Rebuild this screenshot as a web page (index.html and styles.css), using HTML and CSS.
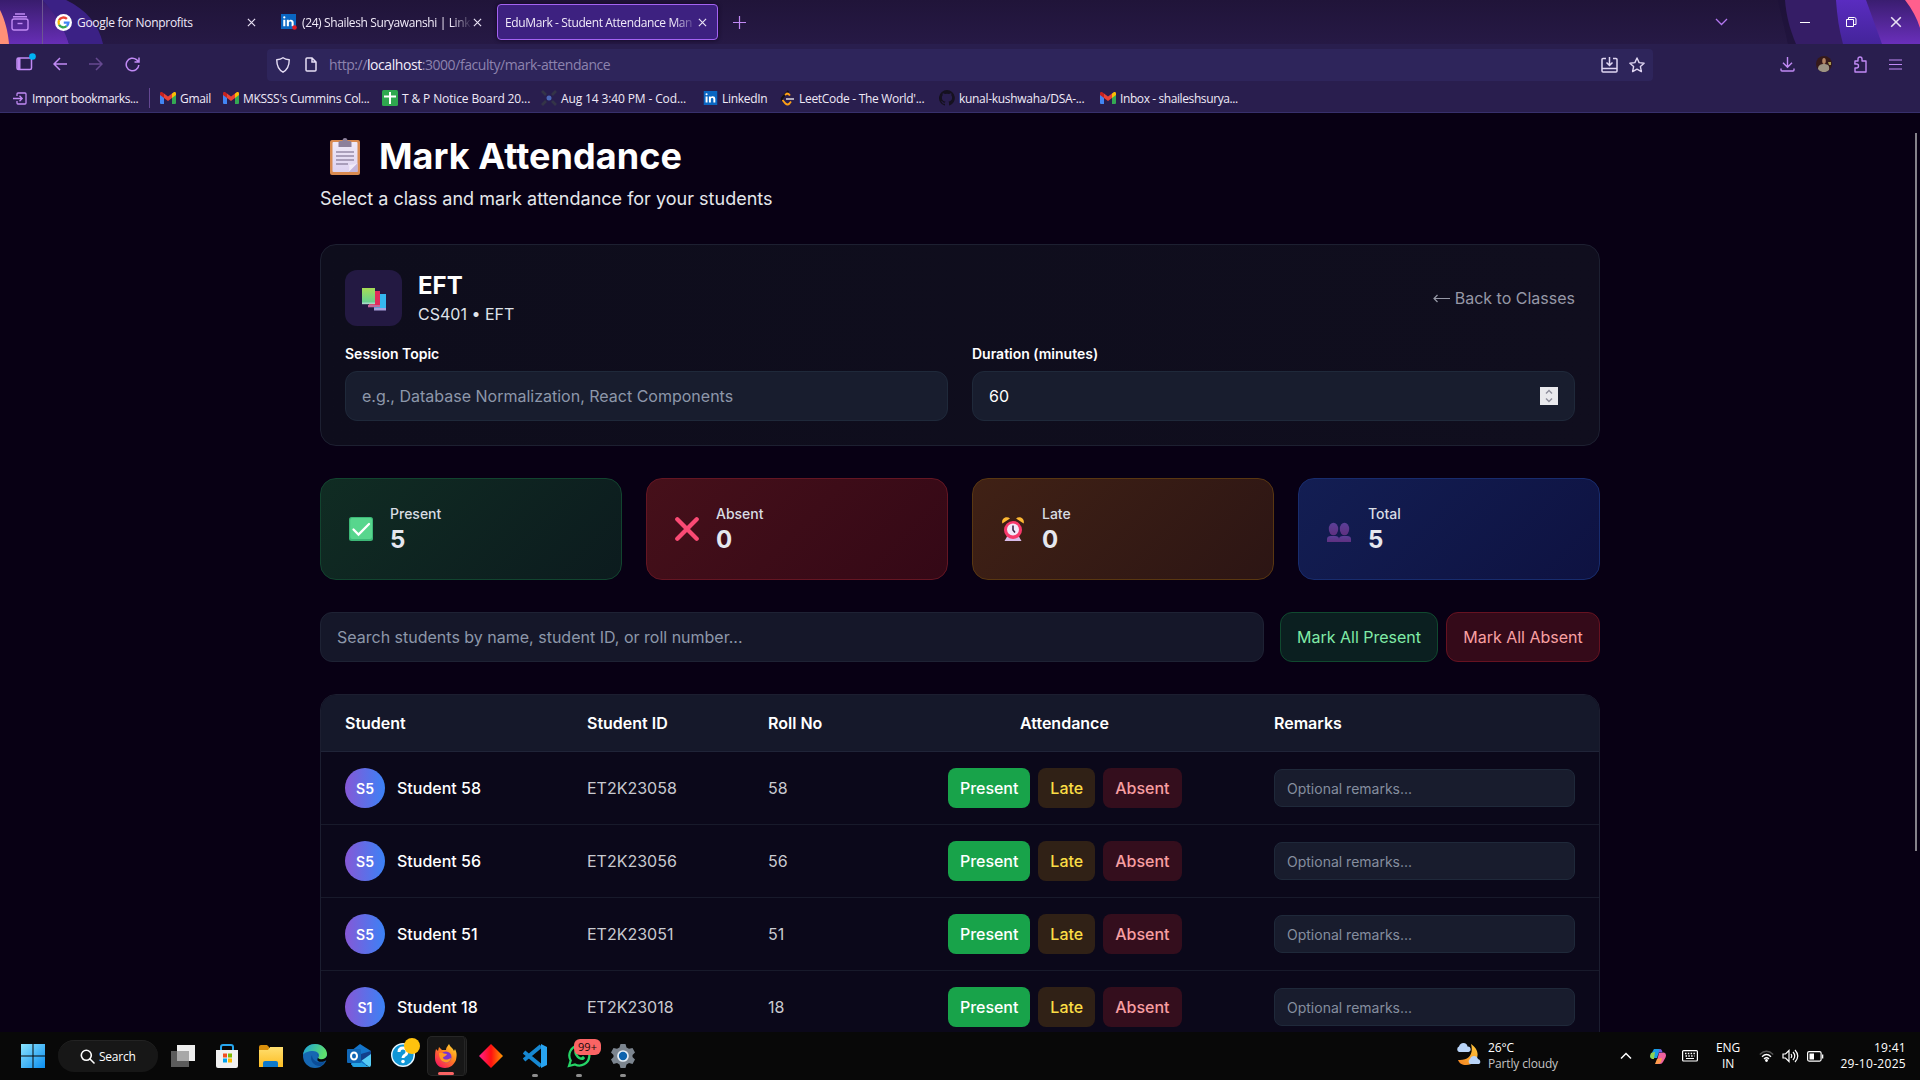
FILE: index.html
```html
<!DOCTYPE html>
<html lang="en">
<head>
<meta charset="utf-8">
<title>EduMark - Student Attendance Management</title>
<link rel="stylesheet" href="styles.css">
</head>
<body>
<svg class="sprite" aria-hidden="true">
  <defs>
    <linearGradient id="win" x1="0" y1="0" x2="1" y2="1"><stop offset="0" stop-color="#8be4ff"/><stop offset="1" stop-color="#0a8df0"/></linearGradient>
    <linearGradient id="edgeTop" x1="0" y1="0" x2="1" y2="0.3"><stop offset="0" stop-color="#1aa0dc"/><stop offset="1" stop-color="#5fe06c"/></linearGradient>
    <linearGradient id="fox" x1="1" y1="0" x2="0.2" y2="1"><stop offset="0" stop-color="#ffe83a"/><stop offset=".45" stop-color="#ff8a1c"/><stop offset="1" stop-color="#f7145f"/></linearGradient>
    <linearGradient id="gem"><stop offset="0" stop-color="#ff1f8f"/><stop offset=".5" stop-color="#ff1010"/><stop offset="1" stop-color="#ff9a00"/></linearGradient>
    <linearGradient id="folder" x1="0" y1="0" x2="0" y2="1"><stop offset="0" stop-color="#ffdf70"/><stop offset="1" stop-color="#fdbd23"/></linearGradient>
    <linearGradient id="moon" x1="1" y1="0" x2="0" y2="1"><stop offset="0" stop-color="#ffc93c"/><stop offset="1" stop-color="#f58320"/></linearGradient>
    <linearGradient id="bandA" x1="0" y1="0" x2="0" y2="1"><stop offset="0" stop-color="#3a1d70"/><stop offset="1" stop-color="#6a2fbb"/></linearGradient>
    <linearGradient id="bandB" x1="0" y1="0" x2="0" y2="1"><stop offset="0" stop-color="#5a2cc0"/><stop offset="1" stop-color="#44249a"/></linearGradient>
    <linearGradient id="paper" x1="0" y1="0" x2="0" y2="1"><stop offset="0" stop-color="#f0e9f7"/><stop offset="1" stop-color="#ddd2f0"/></linearGradient>
    <linearGradient id="green" x1="0" y1="0" x2="0" y2="1"><stop offset="0" stop-color="#a6dc55"/><stop offset="1" stop-color="#62cf94"/></linearGradient>
    <linearGradient id="people" x1="0" y1="0" x2="0" y2="1"><stop offset="0" stop-color="#5b3f98"/><stop offset="1" stop-color="#5f3080"/></linearGradient>
  </defs>
  <symbol id="gmail" viewBox="0 0 16 12"><path fill="#4285f4" d="M0 2v9a1 1 0 0 0 1 1h3V5z"/><path fill="#34a853" d="M16 2v9a1 1 0 0 1-1 1h-3V5z"/><path fill="#fbbc04" d="M12 1.5 14 0c1-.5 2 .3 2 1.4V3l-4 3z"/><path fill="#c5221f" d="M4 1.500 2 0C1-.5 0 .3 0 1.400V3l4 3z"/><path fill="#ea4335" d="M4 1.500 8 4.600l4-3.100V6L8 9 4 6z"/></symbol>
  <symbol id="linkedin" viewBox="0 0 16 16"><path fill="#0a66c2" d="M0 0h16v16H0z"/><path fill="#fff" d="M2.400 6.200h2.200V13H2.400zM2.300 3.700a1.200 1.200 0 1 1 2.400 0 1.200 1.200 0 0 1-2.400 0zM6.200 6.200h2.100v1c.9-1.700 5.200-1.900 5.200 1.800v4h-2.200V9.500c0-2-2.900-1.900-2.900 0V13H6.200z"/></symbol>
  <symbol id="cross" viewBox="0 0 10 10"><path d="m1 1 8 8M9 1 1 9" fill="none" stroke="#e9e2f5" stroke-width="1.300"/></symbol>
</svg>

<div class="browser">
  <header class="tabbar">
    <svg class="theme" width="110" height="44" viewBox="0 0 110 44"><path fill="#30195f" opacity=".6" d="M66 0c18 8 31 24 37 44H60L40 0z"/><path fill="url(#bandA)" d="M0 0h42c14 12 23 27 27 44H0z" opacity=".95"/><path fill="#3b2185" d="M42 0h24c21 10 33 25 37 44H69C63 26 54 12 42 0z"/><path fill="#ff9077" d="M0 10c5 10 8 22 9 34H0z"/></svg>
    <svg class="theme theme-right" width="160" height="44" viewBox="0 0 160 44"><path fill="#1b1038" d="M18 0h16l12 44H28z" opacity=".5"/><path fill="#351d66" d="M25 0h135v44H36C30 30 26 15 25 0z"/><path fill="url(#bandB)" d="M76 0h84v44H83C79 30 77 15 76 0z"/><path fill="url(#bandA)" d="M106 0h54v44h-38z"/><path fill="#ff5f8d" d="M145 0h15v28C157 18 152 9 145 0z"/></svg>
    <svg class="ic" width="18" height="18" viewBox="0 0 18 18"><g fill="none" stroke="#c18af5" stroke-width="1.400"><path d="M4 1h10M2 3.800h14"/><rect x="1" y="6" width="16" height="11" rx="2"/><path d="M6.500 10.500h5"/></g></svg>
    <i class="divider"></i>
    <div class="tab">
      <svg width="17" height="17" viewBox="0 0 18 18"><circle cx="9" cy="9" r="9" fill="#fff"/><g fill="none" stroke-width="2.500"><path stroke="#ea4335" d="M4.300 6.700A5.200 5.200 0 0 1 12.600 5.200"/><path stroke="#fbbc05" d="M4.300 6.700a5.300 5.300 0 0 0 0 4.600"/><path stroke="#34a853" d="M4.300 11.300a5.200 5.200 0 0 0 8 1.600"/><path stroke="#4285f4" d="M12.300 12.900a5.100 5.100 0 0 0 1.900-3.700H9.300"/></g></svg>
      <span class="label">Google for Nonprofits</span><svg class="x" width="9" height="9"><use href="#cross"/></svg>
    </div>
    <div class="tab tab-two">
      <svg width="16" height="16" viewBox="0 0 16 16"><use href="#linkedin" width="15" height="15"/><circle cx="13.500" cy="13.500" r="2.300" fill="#e01b24"/></svg>
      <span class="label fade">(24) Shailesh Suryawanshi | Link</span><svg class="x" width="9" height="9"><use href="#cross"/></svg>
    </div>
    <div class="tab active">
      <span class="label fade">EduMark - Student Attendance Man</span><svg class="x" width="9" height="9"><use href="#cross"/></svg>
    </div>
    <svg class="ic" width="13" height="13" viewBox="0 0 13 13"><path d="M6.500 0v13M0 6.500h13" stroke="#c18af5" stroke-width="1.200"/></svg>
    <svg class="ic chev" width="13" height="8" viewBox="0 0 13 8"><path d="m1 1 5.500 5.500L12 1" fill="none" stroke="#b377f0" stroke-width="1.300"/></svg>
    <svg class="ic wc" width="11" height="11" viewBox="0 0 11 11"><path d="M0 5.500h10" stroke="#fff"/></svg>
    <svg class="ic wc" width="12" height="12" viewBox="0 0 12 12"><path d="M1.500 3.500h7v7h-7zM3.500 3V1.500h6l1.500 1v6H8.500" fill="none" stroke="#fff"/></svg>
    <svg class="ic wc" width="12" height="12"><use href="#cross"/></svg>
  </header>

  <nav class="navbar">
    <svg class="side" width="20" height="18" viewBox="0 0 20 18"><rect x="1" y="5" width="14.500" height="11.500" rx="1.500" fill="none" stroke="#c18af5" stroke-width="1.500"/><path d="M1.500 5h3v11h-3z" fill="#c18af5"/><circle cx="16.500" cy="3.500" r="3.300" fill="#00b3f4"/></svg>
    <svg width="14" height="14" viewBox="0 0 14 14"><path d="M14 7H1M7 1 1 7l6 6" fill="none" stroke="#c18af5" stroke-width="1.500"/></svg>
    <svg class="dim" width="14" height="14" viewBox="0 0 14 14"><path d="M0 7h13M7 1l6 6-6 6" fill="none" stroke="#c18af5" stroke-width="1.500"/></svg>
    <svg width="15" height="15" viewBox="0 0 15 15"><path d="M13.800 8A6.300 6.300 0 1 1 11.500 2.600L13.500 4.500M14 .5V5H9.500" fill="none" stroke="#c18af5" stroke-width="1.500"/></svg>
    <div class="urlbar">
      <svg width="14" height="16" viewBox="0 0 14 16"><path d="M7 .8c2 1.500 4 1.900 6.200 2C13.300 9 11.500 12.500 7 15.200 2.500 12.500.7 9 .8 2.800 3 2.700 5 2.300 7 .8z" fill="none" stroke="#e6def5" stroke-width="1.400"/></svg>
      <svg width="12" height="15" viewBox="0 0 12 15"><path d="M1 2a1 1 0 0 1 1-1h5l4 4v8a1 1 0 0 1-1 1H2a1 1 0 0 1-1-1zM7 1v4h4" fill="none" stroke="#e6def5" stroke-width="1.500"/></svg>
      <span class="url">http://<b>localhost</b>:3000/faculty/mark-attendance</span>
      <svg width="17" height="16" viewBox="0 0 17 16"><path d="M5 1.500H2a1 1 0 0 0-1 1V14a1 1 0 0 0 1 1h13a1 1 0 0 0 1-1V2.500a1 1 0 0 0-1-1h-3M1 11.500h15M8.500 0v8M5.500 5.500l3 3 3-3" fill="none" stroke="#e0d6f2" stroke-width="1.500"/></svg>
      <svg width="16" height="16" viewBox="0 0 16 16"><path d="m8 1 2.100 4.600 5 .6-3.700 3.400 1 5L8 12.100 3.600 14.600l1-5L.9 6.200l5-.6z" fill="none" stroke="#e0d6f2" stroke-width="1.400" stroke-linejoin="round"/></svg>
    </div>
    <svg width="15" height="15" viewBox="0 0 15 15"><path d="M7.500 0v10M3 5.800l4.500 4.500L12 5.800M1 11.500V13a1 1 0 0 0 1 1h11a1 1 0 0 0 1-1v-1.500" fill="none" stroke="#c18af5" stroke-width="1.400"/></svg>
    <svg width="16" height="16" viewBox="0 0 16 16"><circle cx="8" cy="8" r="8" fill="#35191a"/><path d="M2 13c0-4 3-5 6-5s6 1 5 6c-3 3-8 3-11-1z" fill="#9d9483"/><ellipse cx="8" cy="5" rx="1.800" ry="3" fill="#b28463"/><path d="M12 6h3v3h-2z" fill="#a79850"/></svg>
    <svg width="15" height="17" viewBox="0 0 15 17"><path d="M2 5h3V3a2 2 0 0 1 4 0v2h4v11H2v-4h1.500a2 2 0 0 0 0-4H1.800z" fill="none" stroke="#c18af5" stroke-width="1.400" stroke-linejoin="round"/></svg>
    <svg width="13" height="11" viewBox="0 0 13 11"><path d="M0 1h13M0 5.500h13M0 10h13" stroke="#c18af5" stroke-width="1.200"/></svg>
  </nav>

  <div class="bookmarks">
    <span class="bm import"><svg width="14" height="13" viewBox="0 0 14 13"><path d="M4 4V2a1 1 0 0 1 1-1h7a1 1 0 0 1 1 1v9a1 1 0 0 1-1 1H5a1 1 0 0 1-1-1V9M0 6.500h9M6.500 3.800 9.200 6.500 6.500 9.200" fill="none" stroke="#c18af5" stroke-width="1.300"/></svg>Import bookmarks...</span>
    <span class="bm"><svg width="16" height="12"><use href="#gmail"/></svg>Gmail</span>
    <span class="bm"><svg width="16" height="12"><use href="#gmail"/></svg>MKSSS's Cummins Col...</span>
    <span class="bm wide"><svg width="16" height="16" viewBox="0 0 16 16"><rect width="16" height="16" rx="1.500" fill="#2fa84f"/><path d="M8 2v12M2 6.500h12" stroke="#fff" stroke-width="2"/></svg>T &amp; P Notice Board 20...</span>
    <span class="bm wide"><svg width="16" height="16" viewBox="0 0 16 16"><path d="m1 1 4 4M15 1l-4 4M1 15l4-4M15 15l-4-4" stroke="#343448" stroke-width="2.800"/><circle cx="8" cy="8" r="2.500" fill="#4a66b5"/></svg>Aug 14 3:40 PM - Cod...</span>
    <span class="bm"><svg width="15" height="14" viewBox="0 0 16 16"><use href="#linkedin"/></svg>LinkedIn</span>
    <span class="bm"><svg width="15" height="16" viewBox="0 0 15 16"><path d="M8.500 1 2.500 7.500q-1.500 1.500 0 3" fill="none" stroke="#141116" stroke-width="2"/><path d="m5 5 2-1.500q1.500 0 3 2M2.500 10l3 3.500q2 2 4 0l1.500-2" fill="none" stroke="#ffa116" stroke-width="1.900"/><path d="M6 9h8" stroke="#c9c5ce" stroke-width="1.700"/></svg>LeetCode - The World'...</span>
    <span class="bm"><svg width="16" height="16" viewBox="0 0 16 16"><path fill="#15111f" d="M8 0a8 8 0 0 0-2.500 15.600c.4.100.5-.2.500-.4v-1.500c-2.200.5-2.700-1-2.700-1-.4-.9-.9-1.200-.9-1.200-.7-.5.100-.5.100-.5.800.1 1.200.8 1.200.8.700 1.300 1.900.9 2.300.7.100-.5.300-.9.500-1.100-1.800-.2-3.600-.9-3.600-4 0-.9.300-1.600.8-2.100 0-.2-.3-1 .1-2.100 0 0 .7-.2 2.200.8a7.500 7.500 0 0 1 4 0c1.500-1 2.200-.8 2.200-.8.400 1.100.1 1.900.1 2.100.5.600.8 1.300.8 2.100 0 3.100-1.900 3.800-3.700 4 .3.300.6.800.6 1.500v2.200c0 .2.100.5.600.4A8 8 0 0 0 8 0z"/></svg>kunal-kushwaha/DSA-...</span>
    <span class="bm tight"><svg width="16" height="12"><use href="#gmail"/></svg>Inbox - shaileshsurya...</span>
  </div>
</div>

<main class="page">
  <div class="container">
    <h1><svg width="32" height="37" viewBox="0 0 32 37"><rect x="1" y="2" width="30" height="35" rx="2" fill="#d98a50"/><rect x="3.500" y="4" width="25" height="30" rx="1" fill="url(#paper)"/><path d="M28.500 25v9h-9z" fill="#c3b5dc"/><path d="M19.500 34c1-2 1-5 .5-7q4 0 8.500-2z" fill="#f1eaf8"/><path d="M9.500 9V4.500Q9.500 3 11 3h2.500q0-3 2.500-3t2.500 3H21q1.500 0 1.500 1.500V9z" fill="#8d809b"/><path d="M7 14h18M7 18h18M7 22h18M7 26h12" stroke="#978ba8" stroke-width="1.300"/></svg><span>Mark Attendance</span></h1>
    <p class="lead">Select a class and mark attendance for your students</p>

    <section class="card">
      <div class="card-head">
        <div class="book"><svg width="25" height="24" viewBox="0 0 25 24"><path d="M12 7h12v16H12z" fill="#35b7ef"/><path d="M12 21h12v2.500H12z" fill="#a9a0dd"/><path d="M7 4h11v15H7z" fill="#e22b5b"/><path d="M6 18h12v2.300H6z" fill="#c2699d"/><path d="M0 1h13v15H0z" fill="url(#green)"/><path d="M0 15.500h13v1.700H0z" fill="#a8d9c6"/></svg></div>
        <div class="who"><h2>EFT</h2><p>CS401 • EFT</p></div>
        <a class="back"><svg width="17" height="9" viewBox="0 0 17 9"><path d="M17 4.500H1M4.500 1 1 4.500 4.500 8" fill="none" stroke="#9698a6" stroke-width="1.200"/></svg>Back to Classes</a>
      </div>
      <div class="fields">
        <div><label>Session Topic</label><div class="input ph">e.g., Database Normalization, React Components</div></div>
        <div><label>Duration (minutes)</label><div class="input">60<svg class="spin" width="18" height="18" viewBox="0 0 18 18"><path fill="#e9e9ed" d="M0 0h18v18H0z"/><path d="m6 6.500 3-3 3 3M6 11.500l3 3 3-3" fill="none" stroke="#8f8f9d" stroke-width="1.400"/></svg></div></div>
      </div>
    </section>

    <section class="stats">
      <div class="stat present"><svg width="24" height="24" viewBox="0 0 24 24"><rect width="24" height="24" rx="2.500" fill="#3db877"/><rect x="1.200" y="1" width="21.800" height="21" rx="2" fill="#57d68d"/><path d="m4.500 12.500 5 5L20 7" fill="none" stroke="#fff" stroke-width="2.300" stroke-linecap="round"/></svg><div><p>Present</p><strong>5</strong></div></div>
      <div class="stat absent"><svg width="24" height="24" viewBox="0 0 24 24"><path d="m2.300 2.300 19.400 19.400m0-19.400L2.300 21.700" stroke="#fa4a74" stroke-width="4.300" stroke-linecap="round"/></svg><div><p>Absent</p><strong>0</strong></div></div>
      <div class="stat late"><svg width="24" height="24" viewBox="0 0 24 24"><path d="M1.300 6.500C0 1.500 5.500-1.500 9 1.500zM22.700 6.500C24 1.500 18.500-1.500 15 1.500z" fill="#fdb833"/><path d="m7 18-3.500 6h17L17 18z" fill="#d8bce9"/><circle cx="12" cy="13" r="9" fill="#f8396b"/><circle cx="12" cy="12.500" r="6" fill="#f1e8f8"/><path d="M12 8.500V13l2 2.500" fill="none" stroke="#3a2446" stroke-width="1.600"/></svg><div><p>Late</p><strong>0</strong></div></div>
      <div class="stat total"><svg width="24" height="20" viewBox="0 4 24 20"><g fill="url(#people)"><ellipse cx="6.500" cy="11" rx="4.700" ry="6.300"/><ellipse cx="17.500" cy="11" rx="4.700" ry="6.300"/><path d="M0 24v-3q0-3 4-3h4q4 0 4 3 0-3 4-3h4q4 0 4 3v3z"/></g></svg><div><p>Total</p><strong>5</strong></div></div>
    </section>

    <section class="tools">
      <div class="input ph search">Search students by name, student ID, or roll number...</div>
      <button class="all green">Mark All Present</button><button class="all red">Mark All Absent</button>
    </section>

    <section class="table">
      <div class="row head"><span>Student</span><span>Student ID</span><span>Roll No</span><span class="mid">Attendance</span><span>Remarks</span></div>
      <div class="row"><div class="student"><i>S5</i>Student 58</div><span>ET2K23058</span><span>58</span><div class="marks"><b class="p">Present</b><b class="l">Late</b><b class="a">Absent</b></div><div class="remark">Optional remarks...</div></div>
      <div class="row"><div class="student"><i>S5</i>Student 56</div><span>ET2K23056</span><span>56</span><div class="marks"><b class="p">Present</b><b class="l">Late</b><b class="a">Absent</b></div><div class="remark">Optional remarks...</div></div>
      <div class="row"><div class="student"><i>S5</i>Student 51</div><span>ET2K23051</span><span>51</span><div class="marks"><b class="p">Present</b><b class="l">Late</b><b class="a">Absent</b></div><div class="remark">Optional remarks...</div></div>
      <div class="row"><div class="student"><i>S1</i>Student 18</div><span>ET2K23018</span><span>18</span><div class="marks"><b class="p">Present</b><b class="l">Late</b><b class="a">Absent</b></div><div class="remark">Optional remarks...</div></div>
    </section>
  </div>
  <i class="scroll"></i>
</main>

<footer class="taskbar">
  <svg class="start" width="24" height="24" viewBox="0 0 24 24"><path fill="url(#win)" d="M0 0h11.500v11.500H0zM12.500 0H24v11.500H12.500zM0 12.500h11.500V24H0zM12.500 12.500H24V24H12.500z"/></svg>
  <div class="pill"><svg width="15" height="15" viewBox="0 0 15 15"><circle cx="6.300" cy="6.300" r="5" fill="none" stroke="#fff" stroke-width="1.600"/><path d="m10 10 4 4" stroke="#fff" stroke-width="1.600" stroke-linecap="round"/></svg>Search</div>
  <div class="apps">
    <div><svg width="24" height="24" viewBox="0 0 24 24"><path fill="#eee" d="M6 1h18v16H6z"/><path fill="#5c5c5c" d="M0 7h18v16H0z"/><path fill="#a8a8a8" d="M6 7h12v10H6z"/></svg></div>
    <div><svg width="24" height="24" viewBox="0 0 24 24"><path d="M6 7V3q0-2 2-2h8q2 0 2 2v4" fill="none" stroke="#27a6ee" stroke-width="2"/><path fill="#f1f1f1" d="M1 6h22v16q0 2-2 2H3q-2 0-2-2z"/><path fill="#f25022" d="M8 9.500h4v4H8z"/><path fill="#7fba00" d="M13 9.500h4v4h-4z"/><path fill="#00a4ef" d="M8 14.500h4v4H8z"/><path fill="#ffb900" d="M13 14.500h4v4h-4z"/></svg></div>
    <div><svg width="24" height="24" viewBox="0 0 24 24"><path fill="#d98f0b" d="M0 3q0-2 2-2h6l2 2v5H0z"/><path fill="url(#folder)" d="M0 6h9l2-3h13v20H0z"/><path fill="#0d79cc" d="M4 23v-4q0-2 2-2h11q2 0 2 2v4z"/></svg></div>
    <div><svg width="24" height="24" viewBox="0 0 24 24"><circle cx="12" cy="12" r="12" fill="#1667b2"/><path fill="url(#edgeTop)" d="M0 11C1 3 7 0 12 0c7 0 12 5 12 10 0 6-8 7-9 4 3-4-1-7-5-7-5 0-9 2-10 4z"/><path fill="#0b4c96" d="M9 11c-3 5 2 12 9 11l5-5c-5 3-14 1-14-6z"/><path fill="#070707" d="M14 10c3 3-1 5 1 7 3 2 7 0 9-1v-4c-2 4-7 4-9 2q1-2-1-4z"/></svg></div>
    <div><svg width="24" height="24" viewBox="0 0 24 24"><path fill="#1475cb" d="m4 7 9-7 11 7v14H4z"/><path fill="#55cdf7" d="m24 9-10 7 8 7q2 0 2-2z"/><path fill="#25a4e5" d="M5 13v8q0 2 2 2h15z"/><path fill="#123f8c" d="M14 10 24 7v3l-10 7z"/><rect y="5" width="14" height="14" rx="1" fill="#1066b5"/><ellipse cx="7" cy="12" rx="3" ry="3.600" fill="none" stroke="#fff" stroke-width="2"/></svg></div>
    <div><svg class="help" width="30" height="30" viewBox="0 0 30 30"><circle cx="13" cy="17" r="11.300" fill="#1096d6" stroke="#e7f6ff" stroke-width="1.400"/><path d="M9 14q0-4 4-4t4 4q0 2-2.500 3.500Q13 18.500 13 20" fill="none" stroke="#fff" stroke-width="3"/><circle cx="13" cy="23.500" r="1.800" fill="#fff"/><circle cx="22" cy="8" r="8" fill="#ffc20e"/></svg></div>
    <div class="on"><svg width="24" height="24" viewBox="0 0 24 24"><path fill="url(#fox)" d="M2 5l2 2 1-4 3 3h4c0-3 2-4 3-6 1 3 4 4 5 7l1-2c2 4 2 6 1 11-2 5-6 8-11 8C5 24 1 20 1 14c0-3 0-6 1-9z"/><circle cx="12" cy="13" r="5.500" fill="#7a35cf"/><path fill="#ff9a23" d="M5 9c4-1 5 1 8 1-1 3-4 2-4 4 2 3 6 1 8 0-1 7-12 6-12-5z"/></svg></div>
    <div><svg width="24" height="24" viewBox="0 0 24 24"><path fill="url(#gem)" d="m12 0 12 12-12 12L0 12z"/></svg></div>
    <div class="run"><svg width="24" height="24" viewBox="0 0 24 24"><path d="m1 8 17 14M1 16 18 2" stroke="#1688d2" stroke-width="4"/><path fill="#28a4f1" d="m18 0 6 3v18l-6 3z"/></svg></div>
    <div class="run"><svg width="24" height="24" viewBox="0 0 24 24"><path d="M2 22 3.700 16.500A10 10 0 1 1 8 20.500z" fill="none" stroke="#25d366" stroke-width="2.300"/><path d="M8 6c-3 3 3 11 8 10 3-1 2-3 0-4l-2 1.500c-2-1-3-2-4-4L11 8 9.500 5.500z" fill="#25d366"/></svg><em>99+</em></div>
    <div class="run"><svg width="24" height="24" viewBox="0 0 24 24"><path fill="#7c858f" d="M9.500 0h5l1 3.500 2.500 1.300L21.500 4 24 8.500 21.500 11v2l2.500 2.500-2.500 4.500-3.500-1-2.500 1.500-1 3.500h-5l-1-3.500L6 19l-3.500 1L0 15.500 2.500 13v-2L0 8.500 2.500 4 6 4.800l2.500-1.300z"/><circle cx="12" cy="12" r="5" fill="#0d63ae" stroke="#e5edf5" stroke-width="1.700"/></svg></div>
  </div>
  <div class="weather"><svg width="25" height="23" viewBox="0 0 25 23"><path fill="url(#moon)" d="M15 1c12 8 6 21-5 21-4 0-7-2-8-5 10 1 16-5 13-16z"/><path fill="#b9d4f8" d="M3 9a3 3 0 0 1 0-5.500Q4 0 7.500 0 11 0 11.500 3.500a2.800 2.800 0 0 1 1 5.500zM14 21a3 3 0 0 1 0-5q1-3 4-3t4 3a2.700 2.700 0 0 1 1 5z"/></svg><p>26°C<br><span>Partly cloudy</span></p></div>
  <div class="tray">
    <svg width="12" height="8" viewBox="0 0 12 8"><path d="m1 6.500 5-5 5 5" fill="none" stroke="#fff" stroke-width="1.500"/></svg>
    <svg width="16" height="15" viewBox="0 0 16 15"><path fill="#179be5" d="M4 0h6l-3 9H2Q0 9 0 7z"/><path fill="#8fd14f" d="m1 4 4-1-1 7H2Q-1 9 1 4z"/><path fill="#ef619f" d="m9 4 5-.500q3 1 1.500 5L13 13q-1 2-3 2H6z"/><path fill="#ff9d4c" d="m7 10 5-1-1 4q-1 2-4 2H5z"/><path fill="#735ee0" d="M10 0q2 0 2.500 3.500H9L8 6l1-5z"/></svg>
    <svg width="16" height="12" viewBox="0 0 16 12"><rect x=".6" y=".6" width="14.800" height="10.400" rx="1" fill="none" stroke="#fff" stroke-width="1.200"/><path d="M3 3.500h10M3.500 6h9" stroke="#fff" stroke-width="1.300" stroke-dasharray="1.500 1.300"/><path d="M4 8.500h8" stroke="#fff"/></svg>
    <p class="lang">ENG<br>IN</p>
    <svg width="15" height="12" viewBox="0 0 15 12"><path d="M.8 4.500q6.700-6.500 13.400 0" fill="none" stroke="#555" stroke-width="1.300"/><path d="M3 6.700q4.500-4.300 9 0M5 9q2.500-2.500 5 0" fill="none" stroke="#fff" stroke-width="1.300"/><circle cx="7.500" cy="10.500" r="1.400" fill="#fff"/></svg>
    <svg width="17" height="14" viewBox="0 0 17 14"><path d="M1 5h2.500L7 1.500v11L3.500 9H1zM9 5q1.500 2 0 4M11 3q3.500 4 0 8M13 1q5.500 6 0 12" fill="none" stroke="#fff" stroke-width="1.200"/></svg>
    <svg width="17" height="11" viewBox="0 0 17 11"><rect x=".6" y=".6" width="13.500" height="9.500" rx="1.500" fill="none" stroke="#fff" stroke-width="1.200"/><path fill="#fff" d="M2.500 2.500H7v6H2.500zM15 3.500h1.300v4H15z"/></svg>
    <p class="clock">19:41<br>29-10-2025</p>
  </div>
</footer>
</body>
</html>
```
FILE: styles.css
```css
* { box-sizing: border-box; }
body { margin: 0; width: 1920px; height: 1080px; overflow: hidden; display: flex; flex-direction: column; background: #080014; color: #fff; font-family: Inter, "Liberation Sans", sans-serif; }
h1, h2, p { margin: 0; }
svg { display: block; flex: none; }
.sprite { position: absolute; width: 0; height: 0; }

/* Browser frame */
.browser { flex: none; height: 113px; background: #291e4e; border-bottom: 1px solid #37306c; font: 12px "Open Sans", sans-serif; letter-spacing: -.3px; color: #f0eaf8; }
.tabbar { position: relative; height: 44px; display: grid; grid-template-columns: 31px 13px 223px 216px 239px 982px 85px 45px 45px 20px; align-items: center; padding-left: 11px; background: linear-gradient(#201439, #261945); }
.theme { position: absolute; left: 0; top: 0; }
.theme-right { left: auto; right: 0; }
.ic, .tab, .divider { position: relative; }
.divider { width: 1px; height: 44px; background: #6d5691; }
.tab { display: flex; align-items: center; gap: 5px; height: 36px; width: 212px; }
.tab .label { flex: 1; min-width: 0; overflow: hidden; white-space: nowrap; }
.tab .x { margin-right: 11px; }
.tab-two { margin-left: 3px; width: 210px; letter-spacing: -.38px; }
.tab-two .x { margin-right: 9px; }
.tab-two .label { margin-right: -4px; }
.fade { mask-image: linear-gradient(90deg, #000 88%, transparent); }
.active { width: 221px; margin-left: 3px; padding-left: 7px; border: 1px solid #a463f2; border-radius: 4px; background: #3d2180; box-shadow: 0 0 4px #100722; letter-spacing: -.38px; }
.active .x { margin-right: 10px; }
.active .label { margin-right: -4px; }
.navbar { height: 40px; display: grid; grid-template-columns: 37px 36px 36px 142px 1513px 36px 37px 36px 20px; align-items: center; padding-left: 16px; }
.side { margin-top: -4px; }
.dim { opacity: .4; }
.urlbar { width: 1386px; height: 32px; border-radius: 4px; background: #2e255b; display: grid; grid-template-columns: 29px 24px 1272px 28px 20px; align-items: center; padding-left: 9px; margin-top: 1px; }
.url { font-size: 14px; letter-spacing: -.44px; color: #8d83ae; white-space: nowrap; }
.url b { font-weight: 400; color: #f3edfb; }
.bookmarks { height: 28px; display: grid; grid-template-columns: 147px 63px 159px 159px 162px 77px 159px 161px 150px; align-items: center; padding-left: 13px; white-space: nowrap; }
.bm { display: flex; align-items: center; gap: 4px; }
.bm.import { width: 137px; height: 20px; gap: 5px; border-right: 1px solid #644892; letter-spacing: -.38px; }
.bm.wide { letter-spacing: -.13px; }
.bm.tight { letter-spacing: -.4px; }

/* Page */
.page { position: relative; flex: 1; min-height: 0; overflow: hidden; }
.container { width: 1280px; margin: 0 auto; padding-top: 23px; }
.scroll { position: absolute; right: 3px; top: 20px; width: 2px; height: 718px; background: #85828a; }
h1 { display: flex; align-items: center; gap: 18px; height: 40px; padding-left: 9px; font-size: 36px; line-height: 40px; font-weight: 700; letter-spacing: .05px; }
.lead { margin-top: 9px; font-size: 18px; line-height: 28px; color: #e5e7eb; letter-spacing: .01px; }
.card { margin-top: 31px; height: 202px; border: 1px solid #1d2031; border-radius: 16px; padding: 24px 24px 0; background: linear-gradient(90deg, #0e0d1c, #100e1e); }
.card-head { display: flex; align-items: center; height: 57px; }
.book { width: 57px; height: 56px; border-radius: 12px; background: #231942; display: grid; place-items: center; padding: 2px 0 0 1px; }
.who { flex: 1; padding-left: 16px; }
h2 { font-size: 24px; line-height: 32px; font-weight: 700; }
.who p { font-size: 16px; line-height: 24px; color: #dfe2e9; }
.back { display: flex; align-items: center; gap: 5px; color: #9698a6; font-size: 16px; }
.back svg { margin-top: 2px; }
.fields { display: grid; grid-template-columns: 1fr 1fr; gap: 24px; margin-top: 18px; }
label { display: block; font-size: 14px; line-height: 20px; font-weight: 600; margin-bottom: 7px; }
.input { height: 50px; display: flex; align-items: center; padding: 0 16px; border: 1px solid #1f293a; border-radius: 12px; background: #181d2e; font-size: 16px; }
.ph { color: #8d97aa; }
.spin { margin-left: auto; }
.stats { display: grid; grid-template-columns: repeat(4, 1fr); gap: 24px; margin-top: 32px; }
.stat { height: 102px; border: 1px solid; border-radius: 16px; padding-left: 28px; display: flex; align-items: center; gap: 17px; }
.stat > div { margin-top: 2px; }
.stat p { font-size: 14px; line-height: 20px; font-weight: 500; color: #d9dde3; }
.stat strong { display: block; font-size: 24px; line-height: 32px; font-weight: 700; color: #e5e7ef; }
.present { background: linear-gradient(135deg, #102c23, #0c1b1e); border-color: #12442f; }
.absent { background: linear-gradient(135deg, #46101a, #340816); border-color: #641623; }
.late { background: linear-gradient(135deg, #402115, #2c1514); border-color: #593711; }
.total { background: linear-gradient(135deg, #131e53, #0e1241); border-color: #182c6d; }
.stat.total svg { margin-top: 6px; }
.tools { display: flex; margin-top: 32px; height: 50px; }
.search { width: 944px; background: #151729; border-color: #1e2234; margin-right: 16px; }
.all { font: 400 16px Inter, sans-serif; padding: 0; border: 1px solid; border-radius: 12px; }
.green { width: 158px; margin-right: 8px; background: #0b1f20; color: #80eba7; border-color: #10492f; }
.red { width: 154px; background: #340a19; color: #f9a0a2; border-color: #661221; }
.table { margin-top: 32px; border: 1px solid #1c1e30; border-radius: 16px 16px 0 0; overflow: hidden; background: #0b081a; }
.row { height: 73px; display: grid; grid-template-columns: 242px 181px 180px 326px 301px; align-items: center; padding-left: 24px; border-bottom: 1px solid #181a2b; font-size: 16px; color: #c9cad0; }
.head { height: 57px; background: #15182a; font-weight: 600; color: #fff; border-color: #202438; }
.mid { padding-left: 72px; }
.student { display: flex; align-items: center; gap: 12px; font-weight: 500; color: #fff; }
.student i { width: 40px; height: 40px; border-radius: 50%; background: linear-gradient(90deg, #8658d6, #3b82f6); display: grid; place-items: center; font-style: normal; font-weight: 600; font-size: 14px; }
.marks { display: flex; gap: 8px; }
.marks b { height: 40px; line-height: 40px; padding: 0 12px; border-radius: 8px; font-weight: 500; }
.marks .p { background: #18a34a; color: #fff; letter-spacing: -.04px; }
.marks .l { background: #302116; color: #fadd45; }
.marks .a { background: #340e1d; color: #f79ea1; }
.remark { height: 38px; line-height: 37px; padding-left: 12px; border: 1px solid #1f293a; border-radius: 8px; background: #181c2d; color: #858e9f; font-size: 14px; }

/* Taskbar */
.taskbar { flex: none; height: 48px; background: #080808; display: flex; align-items: center; font: 12px/16px "Open Sans", sans-serif; letter-spacing: -.15px; padding-left: 21px; }
.pill { width: 100px; height: 32px; margin-left: 13px; border-radius: 16px; background: #171717; display: flex; align-items: center; gap: 4px; padding-left: 22px; letter-spacing: -.25px; border-top: 1px solid #232323; }
.apps { display: grid; grid-template-columns: repeat(11, 44px); height: 48px; margin-left: 3px; }
.apps > div { position: relative; display: grid; place-items: center; border-radius: 5px; }
.help { margin: -6px -4px 0 0; }
.apps > .on { height: 40px; width: 40px; margin: 4px 2px; background: #171717; border: 1px solid #262626; border-right: 3px double #262626; }
.on::after, .run::after { content: ""; position: absolute; bottom: 3px; width: 6px; height: 3px; border-radius: 2px; background: #8d8d8d; }
.on::after { bottom: 0; width: 16px; background: #fa6464; }
.apps em { position: absolute; left: 17px; top: 7px; width: 27px; height: 16px; border-radius: 6px; background: #fa6464; color: #160909; font-style: normal; font-size: 11px; line-height: 16px; text-align: center; letter-spacing: 0; }
.weather { display: flex; gap: 7px; align-items: center; margin-left: 811px; width: 164px; }
.weather svg { margin-top: -4px; }
.weather span { color: #c4c4c4; }
.tray { display: grid; grid-template-columns: 30px 32px 34px 43px 23px 25px 30px 69px; align-items: center; }
.lang { width: 24px; text-align: center; }
.clock { text-align: right; letter-spacing: .3px; }
```
